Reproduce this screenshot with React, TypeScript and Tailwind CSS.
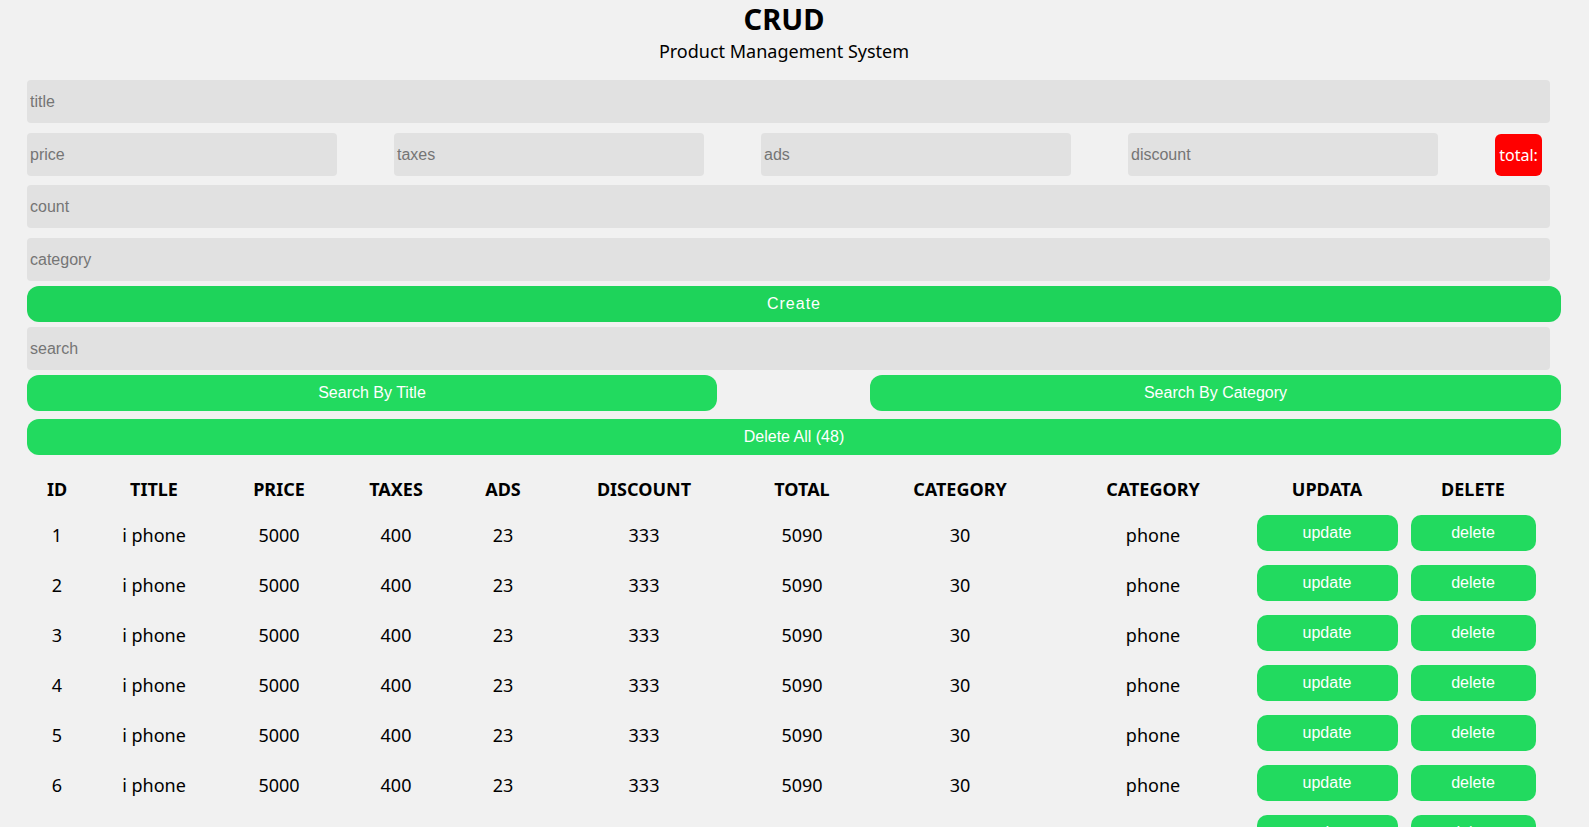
import React from "react";

const rows = Array.from({ length: 10 }, (_, i) => i + 1);

const cols = [60, 134, 116, 118, 96, 186, 130, 186, 200, 148, 144];
const headers = ["ID", "TITLE", "PRICE", "TAXES", "ADS", "DISCOUNT", "TOTAL", "CATEGORY", "CATEGORY", "UPDATA", "DELETE"];

export default function App() {
  const inputCls =
    "block h-[43px] rounded-[4px] bg-[#e1e1e1] pl-[3px] text-[16px] text-[#222] placeholder:text-[#757575] outline-none border-none";
  const td = "p-0 pt-[4px] text-[18px]";
  return (
    <div
      className="min-h-screen bg-[#f1f1f1] text-black"
      style={{ fontFamily: "'Noto Sans', 'Segoe UI', sans-serif" }}
    >
      <div className="pl-[27px] pr-[28px]">
        <div className="text-center mr-[20px]">
          <h1 className="text-[29px] font-bold leading-[38px]">CRUD</h1>
          <h3 className="text-[18px] leading-[24px] mt-[1px]">Product Management System</h3>
        </div>

        <div className="mt-[17px] flex flex-col" style={{ fontFamily: "'Liberation Sans', Arial, sans-serif" }}>
          <input className={inputCls + " w-[1523px]"} placeholder="title" />
          <div className="mt-[10px] flex items-center gap-[57px]">
            <input className={inputCls + " w-[310px]"} placeholder="price" />
            <input className={inputCls + " w-[310px]"} placeholder="taxes" />
            <input className={inputCls + " w-[310px]"} placeholder="ads" />
            <input className={inputCls + " w-[310px]"} placeholder="discount" />
            <span
              className="flex h-[42px] w-[47px] items-center justify-center rounded-[6px] bg-[#ff0000] text-[16px] text-white"
              style={{ fontFamily: "'Noto Sans', 'Segoe UI', sans-serif" }}
            >
              total:
            </span>
          </div>
          <input className={inputCls + " mt-[9px] w-[1523px]"} placeholder="count" />
          <input className={inputCls + " mt-[10px] w-[1523px]"} placeholder="category" />
          <button className="mt-[5px] h-[36px] w-full rounded-[12px] bg-[#1ed35a] text-[16px] tracking-[1px] text-white">
            Create
          </button>
          <input className={inputCls + " mt-[5px] w-[1523px]"} placeholder="search" />
          <div className="mt-[5px] flex justify-between">
            <button className="h-[36px] w-[690px] rounded-[12px] bg-[#22da5f] text-[16px] text-white">
              Search By Title
            </button>
            <button className="h-[36px] w-[691px] rounded-[12px] bg-[#22da5f] text-[16px] text-white">
              Search By Category
            </button>
          </div>
          <button className="mt-[8px] h-[36px] w-full rounded-[12px] bg-[#22da5f] text-[16px] text-white">
            Delete All (48)
          </button>
        </div>

        <table className="mt-[14px] table-fixed border-collapse text-center" style={{ width: 1518 }}>
          <colgroup>
            {cols.map((w, i) => (
              <col key={i} style={{ width: w }} />
            ))}
          </colgroup>
          <thead>
            <tr className="h-[39px]">
              {headers.map((h, i) => (
                <th key={i} className="p-0 pt-[1px] text-[18px] font-bold">
                  {h}
                </th>
              ))}
            </tr>
          </thead>
          <tbody>
            {rows.map((r) => (
              <tr key={r} className="h-[50px]">
                <td className={td}>{r}</td>
                <td className={td}>i phone</td>
                <td className={td}>5000</td>
                <td className={td}>400</td>
                <td className={td}>23</td>
                <td className={td}>333</td>
                <td className={td}>5090</td>
                <td className={td}>30</td>
                <td className={td}>phone</td>
                <td className="p-0">
                  <div className="flex justify-center">
                    <button
                      className="h-[36px] w-[141px] rounded-[10px] bg-[#22da5f] text-[16px] text-white"
                      style={{ fontFamily: "'Liberation Sans', Arial, sans-serif" }}
                    >
                      update
                    </button>
                  </div>
                </td>
                <td className="p-0">
                  <div className="flex justify-center">
                    <button
                      className="h-[36px] w-[125px] rounded-[10px] bg-[#22da5f] text-[16px] text-white"
                      style={{ fontFamily: "'Liberation Sans', Arial, sans-serif" }}
                    >
                      delete
                    </button>
                  </div>
                </td>
              </tr>
            ))}
          </tbody>
        </table>
      </div>
    </div>
  );
}
